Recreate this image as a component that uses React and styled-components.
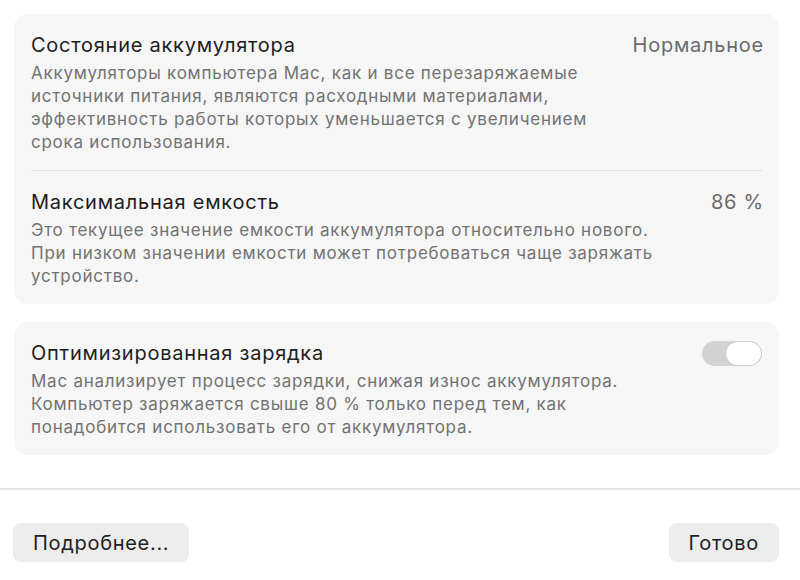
import React from "react";
import styled, { createGlobalStyle } from "styled-components";

const GlobalStyle = createGlobalStyle`
  html, body {
    margin: 0;
    padding: 0;
    background: #ffffff;
  }
  body {
    font-family: Inter, "Liberation Sans", sans-serif;
    -webkit-font-smoothing: antialiased;
  }
`;

const sections = [
  {
    rows: [
      {
        title: "Состояние аккумулятора",
        value: "Нормальное",
        text: [
          "Аккумуляторы компьютера Mac, как и все перезаряжаемые",
          "источники питания, являются расходными материалами,",
          "эффективность работы которых уменьшается с увеличением",
          "срока использования.",
        ],
      },
      {
        title: "Максимальная емкость",
        value: "86 %",
        text: [
          "Это текущее значение емкости аккумулятора относительно нового.",
          "При низком значении емкости может потребоваться чаще заряжать",
          "устройство.",
        ],
      },
    ],
  },
  {
    rows: [
      {
        title: "Оптимизированная зарядка",
        toggle: true,
        text: [
          "Mac анализирует процесс зарядки, снижая износ аккумулятора.",
          "Компьютер заряжается свыше 80 % только перед тем, как",
          "понадобится использовать его от аккумулятора.",
        ],
      },
    ],
  },
];

const App = () => {
  return (
    <Page>
      <GlobalStyle />
      <Content>
        {sections.map((section, i) => (
          <Card key={i}>
            {section.rows.map((row, j) => (
              <React.Fragment key={j}>
                {j > 0 && <Divider />}
                <Row>
                  <Head>
                    <Title>{row.title}</Title>
                    {row.value && <Value>{row.value}</Value>}
                    {row.toggle && (
                      <Toggle>
                        <Knob />
                      </Toggle>
                    )}
                  </Head>
                  <Description>
                    {row.text.map((line, k) => (
                      <span key={k}>{line}</span>
                    ))}
                  </Description>
                </Row>
              </React.Fragment>
            ))}
          </Card>
        ))}
      </Content>
      <Footer>
        <Button>Подробнее...</Button>
        <Button>Готово</Button>
      </Footer>
    </Page>
  );
};

const Page = styled.div`
  width: 800px;
  height: 580px;
  display: flex;
  flex-direction: column;
  overflow: hidden;
`;

const Content = styled.div`
  display: flex;
  flex-direction: column;
  gap: 18px;
  padding: 14px 21px 0 14px;
  height: 488px;
  box-sizing: border-box;
`;

const Card = styled.section`
  background: #f6f6f6;
  border-radius: 14px;
  padding: 0 17px;
`;

const Row = styled.div`
  padding: 19px 0 16px;
`;

const Divider = styled.div`
  height: 1px;
  background: #e2e2e2;
`;

const Head = styled.div`
  display: flex;
  align-items: center;
  justify-content: space-between;
  height: 24px;
  margin-bottom: 5px;
`;

const Title = styled.div`
  font-size: 20px;
  color: #1e1e1e;
  letter-spacing: 0.75px;
`;

const Value = styled.div`
  font-size: 20px;
  color: #6b6b6b;
  letter-spacing: 0.75px;
  margin-right: -2px;
`;

const Description = styled.div`
  display: flex;
  flex-direction: column;
  font-size: 17px;
  line-height: 23px;
  letter-spacing: 0.75px;
  color: #727272;
`;

const Toggle = styled.div`
  width: 60px;
  height: 25px;
  border-radius: 13px;
  background: #d2d2d2;
  display: flex;
  align-items: center;
  justify-content: flex-end;
  padding: 1px;
  box-sizing: border-box;
`;

const Knob = styled.div`
  width: 35px;
  height: 23px;
  border-radius: 12px;
  background: #ffffff;
  box-shadow: 0 0 1px rgba(0, 0, 0, 0.2);
`;

const Footer = styled.div`
  flex: 1;
  border-top: 2px solid #e4e4e4;
  display: flex;
  justify-content: space-between;
  align-items: flex-start;
  padding: 33px 21px 0 13px;
`;

const Button = styled.button`
  font-family: Inter, "Liberation Sans", sans-serif;
  font-size: 20px;
  letter-spacing: 0.7px;
  color: #1e1e1e;
  background: #ececec;
  border: none;
  border-radius: 8px;
  height: 39px;
  padding: 0 20px;
`;

export default App;
